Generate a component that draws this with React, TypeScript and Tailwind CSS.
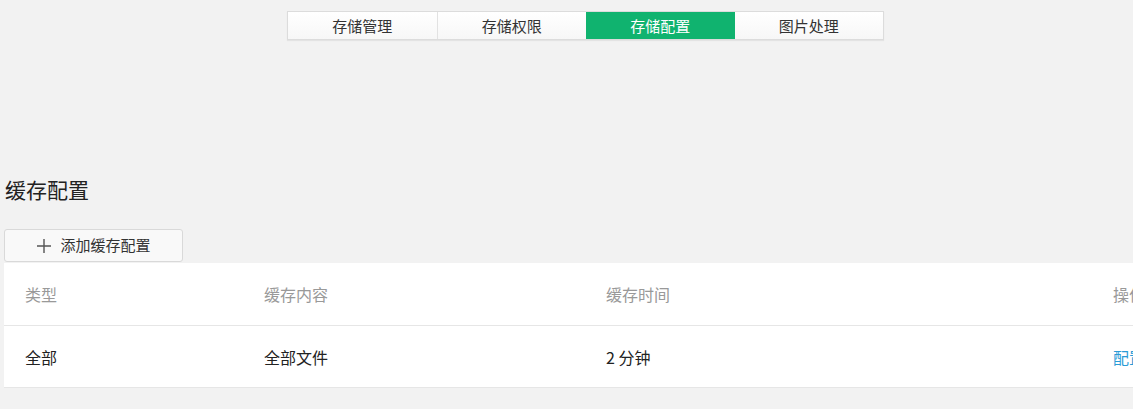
import React from 'react';

const TABS = ['存储管理', '存储权限', '存储配置', '图片处理'];
const ACTIVE = 2;

const font = { fontFamily: '"Noto Sans CJK SC", "Noto Sans", sans-serif' };

const rows = [{ id: '1', tipo: '全部', conteudo: '全部文件', tempo: '2 分钟' }];

export default function App() {
    return (
        <div className="w-[1133px] h-[409px] overflow-hidden bg-[#f2f2f2]" style={font}>
            <div className="pt-[11px] pl-[287px]">
                <div className="flex w-[597px] h-[29px] border border-[#dcdcdc] bg-white shadow-[0_1px_1px_rgba(0,0,0,0.06)]">
                    {TABS.map((t, i) => (
                        <div
                            key={t}
                            className={`flex-1 flex items-center justify-center text-[15px] leading-none ${i === ACTIVE ? 'bg-[#10b36f] text-white' : 'text-[#333] bg-gradient-to-b from-white to-[#f7f7f7]'} ${i > 0 && i !== ACTIVE && i - 1 !== ACTIVE ? 'border-l border-[#e2e2e2]' : ''}`}
                        >
                            {t}
                        </div>
                    ))}
                </div>
            </div>

            <h2 className="mt-[134px] ml-[5px] text-[21px] leading-[30px] text-[#222]">缓存配置</h2>

            <button className="mt-[25px] ml-[4px] w-[179px] h-[33px] flex items-center justify-center gap-[8px] bg-[#f9f9f9] border border-[#d9d9d9] rounded-[3px] text-[15px] text-[#333]">
                <svg width="16" height="16" viewBox="0 0 16 16" className="text-[#555]">
                    <path d="M8 1v14M1 8h14" stroke="currentColor" strokeWidth="1.4" />
                </svg>
                添加缓存配置
            </button>

            <div className="ml-[4px] mt-px w-[1250px] bg-white">
                <div className="flex h-[63px] items-center border-b border-[#e6e6e6] text-[16px] text-[#999]">
                    <div className="w-[239px] pl-[21px]">类型</div>
                    <div className="w-[342px] pl-[21px]">缓存内容</div>
                    <div className="w-[507px] pl-[21px]">缓存时间</div>
                    <div className="pl-[21px]">操作</div>
                </div>
                {rows.map(r => (
                    <div key={r.id} className="flex h-[62px] items-center border-b border-[#e6e6e6] text-[16px] text-[#222]">
                        <div className="w-[239px] pl-[21px]">{r.tipo}</div>
                        <div className="w-[342px] pl-[21px]">{r.conteudo}</div>
                        <div className="w-[507px] pl-[21px]">{r.tempo}</div>
                        <div className="pl-[21px] text-[#2a9bd6]">配置</div>
                    </div>
                ))}
            </div>
        </div>
    );
}
